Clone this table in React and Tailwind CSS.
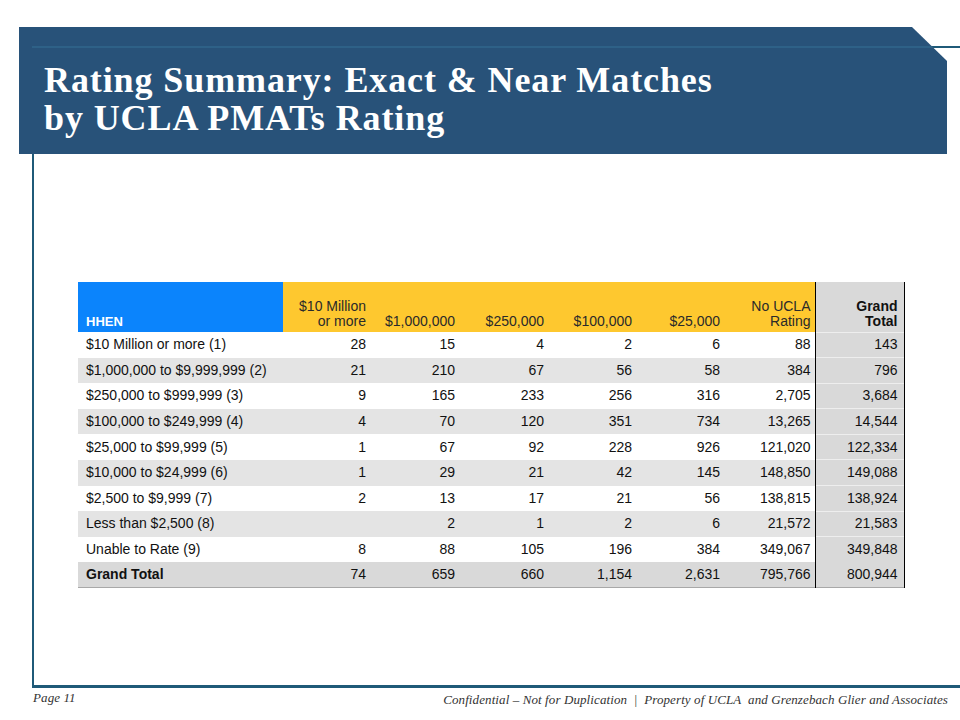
const COLS = ['$10 Million|or more', '$1,000,000', '$250,000', '$100,000', '$25,000', 'No UCLA|Rating']

const ROWS = [
  ['$10 Million or more (1)', '28', '15', '4', '2', '6', '88', '143'],
  ['$1,000,000 to $9,999,999 (2)', '21', '210', '67', '56', '58', '384', '796'],
  ['$250,000 to $999,999 (3)', '9', '165', '233', '256', '316', '2,705', '3,684'],
  ['$100,000 to $249,999 (4)', '4', '70', '120', '351', '734', '13,265', '14,544'],
  ['$25,000 to $99,999 (5)', '1', '67', '92', '228', '926', '121,020', '122,334'],
  ['$10,000 to $24,999 (6)', '1', '29', '21', '42', '145', '148,850', '149,088'],
  ['$2,500 to $9,999 (7)', '2', '13', '17', '21', '56', '138,815', '138,924'],
  ['Less than $2,500 (8)', '', '2', '1', '2', '6', '21,572', '21,583'],
  ['Unable to Rate (9)', '8', '88', '105', '196', '384', '349,067', '349,848'],
]

const TOTAL = ['Grand Total', '74', '659', '660', '1,154', '2,631', '795,766', '800,944']

const WIDTHS = ['w-[205px]', 'w-[87px]', 'w-[89px]', 'w-[89px]', 'w-[88px]', 'w-[88px]', 'w-[91px]', 'w-[89px]']

function RatingTable() {
  return (
    <table className="table-fixed border-collapse text-[14px] leading-[15px] text-[#111] w-[826px]" style={{ fontFamily: '"Liberation Sans", Arial, sans-serif' }}>
      <colgroup>
        {WIDTHS.map((w, i) => <col key={i} className={w} />)}
      </colgroup>
      <thead>
        <tr className="h-[50px]">
          <th className="bg-[#0b84fc] text-white font-bold text-left align-bottom pl-2 pb-[3px] text-[13px]">HHEN</th>
          {COLS.map((c) => (
            <th key={c} className="bg-[#fec82f] text-[#2a2a2a] font-normal text-right align-bottom pr-1 pb-[3px]">
              {c.split('|').map((l) => <div key={l}>{l}</div>)}
            </th>
          ))}
          <th className="bg-[#d9d9d9] font-bold text-right align-bottom pr-[6px] pb-[3px] border-l border-r border-black">
            <div>Grand</div>
            <div>Total</div>
          </th>
        </tr>
      </thead>
      <tbody>
        {ROWS.map((r, i) => (
          <tr key={r[0]} className={`h-[25.6px] ${i % 2 === 1 ? 'bg-[#e4e4e4]' : 'bg-white'}`}>
            <td className="pl-2">{r[0]}</td>
            {r.slice(1, 7).map((v, j) => <td key={j} className="text-right pr-1">{v}</td>)}
            <td className="bg-[#d9d9d9] text-right pr-[6px] border-l border-r border-black border-t border-t-[#eeeeee]">{r[7]}</td>
          </tr>
        ))}
        <tr className="h-[25.6px] bg-[#d9d9d9] border-b border-[#a8a8a8]">
          <td className="pl-2 font-bold">{TOTAL[0]}</td>
          {TOTAL.slice(1, 7).map((v, j) => <td key={j} className="text-right pr-1">{v}</td>)}
          <td className="text-right pr-[6px] border-l border-r border-black">{TOTAL[7]}</td>
        </tr>
      </tbody>
    </table>
  )
}

export default function App() {
  return (
    <div className="relative w-[960px] h-[720px] bg-white overflow-hidden">
      {/* frame lines */}
      <div className="absolute left-[32px] top-[46px] w-[940px] h-[642px] border-l-2 border-t-2 border-b-[3px] border-[#1f5a78]" />

      {/* title band */}
      <div className="relative ml-[19px] mt-[27px] w-[928px] h-[127px] bg-[#285279] [clip-path:polygon(0_0,893px_0,100%_34px,100%_100%,0_100%)]">
        <div className="absolute left-[13px] right-0 top-[19px] h-[2px] bg-[#2e6187]" />
        <h1
          className="relative pl-[25px] pt-[34px] text-white font-bold text-[36px] leading-[38px] tracking-[0.9px]"
          style={{ fontFamily: '"Liberation Serif", "Times New Roman", serif' }}
        >
          Rating Summary: Exact &amp; Near Matches
          <br />
          by UCLA PMATs Rating
        </h1>
      </div>

      <div className="ml-[78px] mt-[128px]">
        <RatingTable />
      </div>

      {/* footer */}
      <div
        className="absolute left-[33px] right-[12px] top-[688px] flex justify-between italic text-[13px] tracking-[0.1px] text-[#333]"
        style={{ fontFamily: '"Liberation Serif", "Times New Roman", serif' }}
      >
        <span>Page 11</span>
        <span className="pt-[2px]">Confidential – Not for Duplication&nbsp;&nbsp;|&nbsp;&nbsp;Property of UCLA&nbsp; and Grenzebach Glier and Associates</span>
      </div>
    </div>
  )
}
